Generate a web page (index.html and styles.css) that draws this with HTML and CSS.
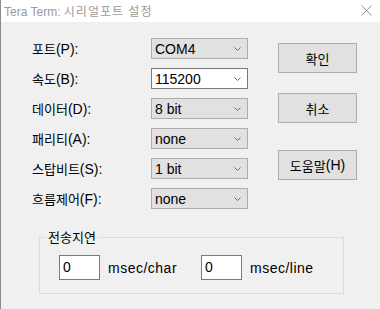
FILE: index.html
```html
<!DOCTYPE html>
<html lang="ko">
<head>
<meta charset="utf-8">
<title>Tera Term: 시리얼포트 설정</title>
<link rel="stylesheet" href="styles.css">
</head>
<body>
<div class="window">
  <div class="titlebar">
    <span class="title">Tera Term: <span class="ko-t">시리얼포트 설정</span></span>
    <svg class="close" width="11" height="11" viewBox="0 0 11 11"><path d="M0.5 0.5L10.5 10.5M10.5 0.5L0.5 10.5" stroke="#8f8f8f" stroke-width="1" fill="none"/></svg>
  </div>
  <div class="content">
    <div class="main">
      <div class="form">
        <label class="lbl"><span class="ko">포트</span>(P):</label>
        <div class="combo"><span>COM4</span><svg class="chev" width="7" height="4" viewBox="0 0 7 4"><path d="M0.5 0.5L3.5 3.5L6.5 0.5" stroke="#6d6d6d" fill="none"/></svg></div>
        <label class="lbl"><span class="ko">속도</span>(B):</label>
        <div class="combo edit"><span>115200</span><svg class="chev" width="7" height="4" viewBox="0 0 7 4"><path d="M0.5 0.5L3.5 3.5L6.5 0.5" stroke="#6d6d6d" fill="none"/></svg></div>
        <label class="lbl"><span class="ko">데이터</span>(D):</label>
        <div class="combo"><span>8 bit</span><svg class="chev" width="7" height="4" viewBox="0 0 7 4"><path d="M0.5 0.5L3.5 3.5L6.5 0.5" stroke="#6d6d6d" fill="none"/></svg></div>
        <label class="lbl"><span class="ko">패리티</span>(A):</label>
        <div class="combo"><span>none</span><svg class="chev" width="7" height="4" viewBox="0 0 7 4"><path d="M0.5 0.5L3.5 3.5L6.5 0.5" stroke="#6d6d6d" fill="none"/></svg></div>
        <label class="lbl"><span class="ko">스탑비트</span>(S):</label>
        <div class="combo"><span>1 bit</span><svg class="chev" width="7" height="4" viewBox="0 0 7 4"><path d="M0.5 0.5L3.5 3.5L6.5 0.5" stroke="#6d6d6d" fill="none"/></svg></div>
        <label class="lbl"><span class="ko">흐름제어</span>(F):</label>
        <div class="combo"><span>none</span><svg class="chev" width="7" height="4" viewBox="0 0 7 4"><path d="M0.5 0.5L3.5 3.5L6.5 0.5" stroke="#6d6d6d" fill="none"/></svg></div>
      </div>
      <div class="buttons">
        <div class="btn btn-ok"><span class="ko">확인</span></div>
        <div class="btn btn-cancel"><span class="ko">취소</span></div>
        <div class="btn btn-help"><span class="ko">도움말</span>(H)</div>
      </div>
    </div>
    <fieldset class="delay">
      <legend><span class="ko">전송지연</span></legend>
      <div class="row">
        <div class="pair"><div class="input">0</div><span class="unit">msec/char</span></div>
        <div class="pair"><div class="input">0</div><span class="unit">msec/line</span></div>
      </div>
    </fieldset>
  </div>
</div>
</body>
</html>
```

FILE: styles.css
```css
html, body {
  margin: 0;
  padding: 0;
}
body {
  width: 380px;
  height: 309px;
  overflow: hidden;
  background: #f0f0f0;
  font-family: "Liberation Sans", "Noto Sans CJK KR", sans-serif;
  font-size: 14px;
  color: #000;
}
.ko {
  font-family: "Noto Sans CJK KR", sans-serif;
  font-size: 13px;
}
.window {
  height: 309px;
  border-left: 1px solid #8c8c8c;
  box-sizing: border-box;
  background: #f0f0f0;
}
.titlebar {
  height: 22px;
  background: #fff;
  display: flex;
  align-items: center;
  justify-content: space-between;
  padding: 0 8px 0 3px;
}
.title {
  font-family: "Liberation Sans", "Noto Sans CJK KR", sans-serif;
  font-size: 12px;
  color: #9a9a9a;
  margin-top: -1px;
}
.ko-t {
  font-family: "Noto Sans CJK KR", sans-serif;
  font-size: 12px;
  letter-spacing: 1px;
}
.close {
  display: block;
  margin-top: -1px;
}
.content {
  padding: 16px 0 0 31px;
}
.main {
  display: flex;
  align-items: flex-start;
}
.form {
  display: grid;
  grid-template-columns: 119px 97px;
  grid-auto-rows: 21px;
  row-gap: 9px;
  align-items: center;
}
.lbl {
  line-height: 21px;
  white-space: nowrap;
}
.combo {
  height: 21px;
  box-sizing: border-box;
  border: 1px solid #adadad;
  background: #e1e1e1;
  display: flex;
  align-items: center;
  justify-content: space-between;
  padding: 0 6px 0 3px;
}
.combo.edit {
  background: #fff;
  border-color: #7a7a7a;
}
.chev {
  display: block;
  margin-top: 1px;
}
.buttons {
  margin-left: 30px;
  padding-top: 5px;
  display: flex;
  flex-direction: column;
}
.btn {
  width: 79px;
  height: 30px;
  box-sizing: border-box;
  border: 1px solid #adadad;
  background: #e1e1e1;
  display: flex;
  align-items: center;
  justify-content: center;
  white-space: nowrap;
}
.btn-cancel {
  margin-top: 20px;
}
.btn-help {
  margin-top: 27px;
}
.delay {
  margin: 20px 0 0 7px;
  width: 305px;
  box-sizing: border-box;
  border: 1px solid #dcdcdc;
  padding: 10px 0 13px 19px;
}
.delay legend {
  padding: 0 2px;
  margin-left: -13px;
  line-height: 16px;
}
.row {
  display: flex;
}
.pair {
  width: 142px;
  display: flex;
  align-items: center;
  gap: 8px;
}
.unit {
  letter-spacing: 0.5px;
}
.input {
  width: 41px;
  height: 25px;
  box-sizing: border-box;
  border: 1px solid #7a7a7a;
  background: #fff;
  padding: 2px 0 0 3px;
  line-height: 18px;
}
```
